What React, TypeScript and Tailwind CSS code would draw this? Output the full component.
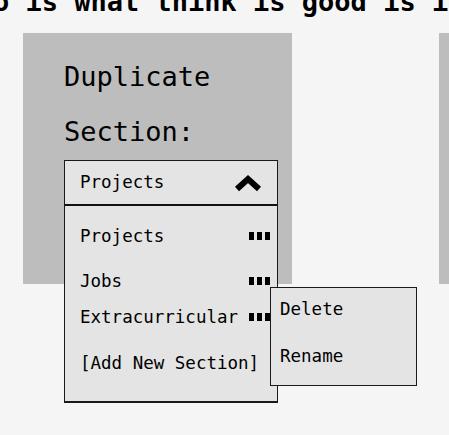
import React from "react";

const sections = [
  { name: "Projects", mt: "mt-0" },
  { name: "Jobs", mt: "mt-[21px]" },
  { name: "Extracurricular", mt: "mt-[12px]" },
];

function Dots() {
  return (
    <span className="flex gap-[3px]">
      <span className="block h-[8px] w-[5px] bg-black" />
      <span className="block h-[8px] w-[5px] bg-black" />
      <span className="block h-[8px] w-[5px] bg-black" />
    </span>
  );
}

export default function App() {
  return (
    <div
      className="h-[435px] w-[449px] overflow-hidden bg-[#f5f5f5] text-black"
      style={{ fontFamily: '"DejaVu Sans Mono", monospace' }}
    >
      <div className="ml-[-7px] mt-[-12px] whitespace-nowrap text-[27px] font-bold leading-[27px]">
        o is what think is good is in
      </div>

      <div className="mt-[18px] flex gap-[147px] pl-[23px]">
        <div className="h-[251px] w-[269px] shrink-0 bg-[#bdbdbd] pl-[41px] pt-[16px]">
          <h2 className="text-[27px] font-normal leading-[55px]">
            Duplicate
            <br />
            Section:
          </h2>

          <div className="relative mt-[1px] w-[214px] border border-b-2 border-[#1a1a1a] bg-[#e4e4e4] text-[17.5px]">
            <div className="flex h-[45px] items-center justify-between border-b-2 border-[#111] pl-[15px] pr-[14px]">
              <span>Projects</span>
              <svg width="30" height="18" viewBox="0 0 30 18">
                <polyline
                  points="4,15 15,5 26,15"
                  fill="none"
                  stroke="#000"
                  strokeWidth="6"
                />
              </svg>
            </div>

            <div className="pb-[26px] pl-[15px] pr-[7px] pt-[18px]">
              {sections.map((s) => (
                <div
                  key={s.name}
                  className={`flex h-[24px] items-center justify-between leading-[24px] ${s.mt}`}
                >
                  <span>{s.name}</span>
                  <Dots />
                </div>
              ))}
              <div className="mt-[22px] h-[24px] leading-[24px]">
                [Add New Section]
              </div>
            </div>

            <div className="absolute left-[205px] top-[126px] h-[99px] w-[147px] border border-[#1a1a1a] bg-[#e4e4e4] pl-[9px] pt-[9px]">
              <div className="h-[24px] leading-[24px]">Delete</div>
              <div className="mt-[23px] h-[24px] leading-[24px]">Rename</div>
            </div>
          </div>
        </div>

        <div className="h-[251px] w-[269px] shrink-0 bg-[#bdbdbd]" />
      </div>
    </div>
  );
}
